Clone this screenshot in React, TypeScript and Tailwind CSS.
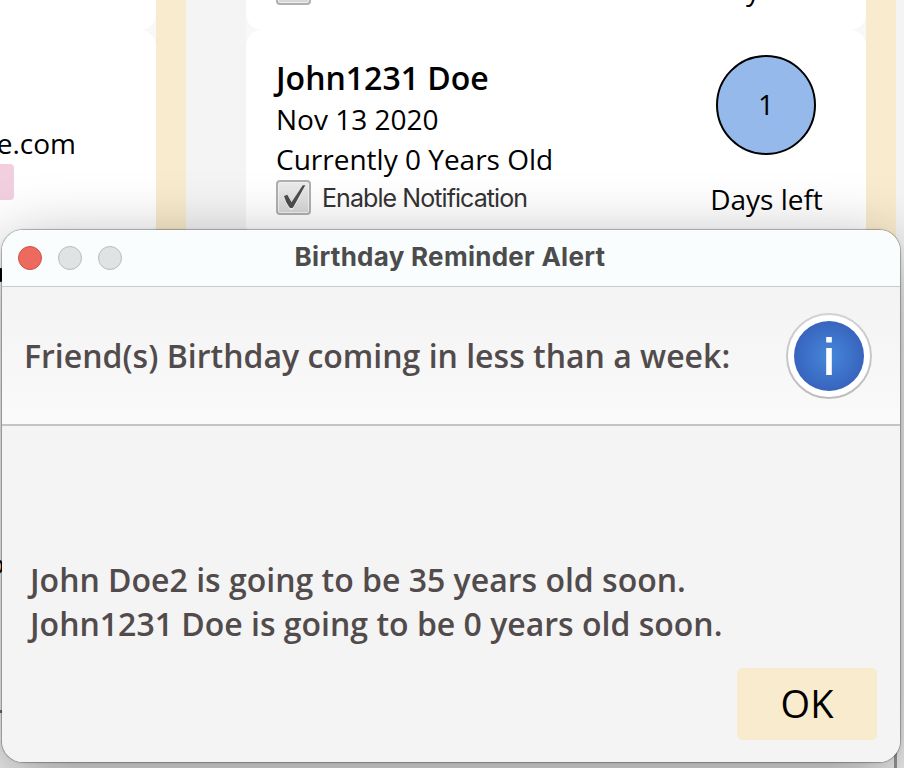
import React from 'react';

const OPEN = "font-['Open_Sans','Noto_Sans',sans-serif]";
const INTER = "font-['Inter',sans-serif]";

function CheckBox({ checked }: { checked: boolean }) {
  return (
    <div className="h-[35px] w-[35px] shrink-0 rounded-[4px] border-2 border-[#b0b0b0] bg-linear-to-b from-[#ececec] to-[#d6d6d6] shadow-[inset_0_0_0_1px_#f0f0f0]">
      {checked && (
        <svg viewBox="0 0 31 31" className="block h-[31px] w-[31px]">
          <path d="M6 14 L9.3 12.8 L13.5 20.2 L24.8 3.2 L27.3 3.2 L15.3 25.5 Q13.3 28 11.3 25.5 Q7.5 20.5 6 14Z" fill="#fff" transform="translate(0 1)" />
          <path d="M6 14 L9.3 12.8 L13.5 20.2 L24.8 3.2 L27.3 3.2 L15.3 25.2 Q13.3 27.3 11.3 25.2 Q7.5 20 6 14Z" fill="#4d4d4d" />
        </svg>
      )}
    </div>
  );
}

function FriendCard({ name, date, age, days, checked }: { name: string; date: string; age: string; days: string; checked: boolean }) {
  return (
    <div className={`flex h-[210px] shrink-0 justify-between rounded-[16px] bg-white pl-[30px] text-black ${OPEN}`}>
      <div className="flex flex-col whitespace-nowrap pt-[28px]">
        <div className="h-[41px] text-[32px] leading-[40px] font-semibold">{name}</div>
        <div className="h-[40px] text-[28px] leading-[40px]">{date}</div>
        <div className="h-[41px] text-[28px] leading-[40px]">{age}</div>
        <div className="flex items-center gap-[11px]">
          <CheckBox checked={checked} />
          {checked && <span className={`text-[25px] leading-[34px] tracking-[-0.93px] text-[#333] ${INTER}`}>Enable Notification</span>}
        </div>
      </div>
      <div className="flex w-[200px] flex-col items-center pt-[25px]">
        <div className="flex h-[100px] w-[100px] items-center justify-center rounded-full border-2 border-black bg-[#96b9ec] pb-[2px] text-[28px]">{days}</div>
        <div className="mt-[24px] ml-px text-[28px] leading-[40px]">Days left</div>
      </div>
    </div>
  );
}

function ContactCard({ email }: { email: string }) {
  return (
    <div className={`h-[210px] shrink-0 rounded-r-[16px] bg-white pt-[93px] ${OPEN}`}>
      <div className="flex h-[41px] w-[76px] justify-end text-[28px] leading-[40px] whitespace-nowrap text-black">{email}</div>
      <div className="h-[36px] w-[14px] rounded-r-[4px] bg-[#f2cfdf]" />
    </div>
  );
}

function InfoIcon() {
  return (
    <svg viewBox="0 0 86 86" className="h-[86px] w-[86px] shrink-0">
      <defs>
        <radialGradient id="blue">
          <stop offset="0" stopColor="#4588da" />
          <stop offset="1" stopColor="#3864be" />
        </radialGradient>
        <linearGradient id="ring" x1="0" y1="0" x2="0" y2="1">
          <stop offset="0" stopColor="#d2d2d2" />
          <stop offset="1" stopColor="#bdbdbd" />
        </linearGradient>
      </defs>
      <circle cx="43" cy="43" r="42" fill="#fff" stroke="url(#ring)" strokeWidth="2" />
      <circle cx="43" cy="43" r="35" fill="url(#blue)" />
      <rect x="40.2" y="24" width="5.6" height="5.5" fill="#fff" />
      <rect x="40.2" y="35" width="5.6" height="27" fill="#fff" />
    </svg>
  );
}

function AlertDialog() {
  return (
    <div className="absolute top-[230px] left-[2px] flex h-[532px] w-[898px] flex-col overflow-hidden rounded-[21px] bg-[#f4f4f4]">
      <div className="grid h-[57px] shrink-0 grid-cols-[150px_1fr_150px] items-center border-b border-[#c9cbcb] bg-[#f9fdfe]">
        <div className="flex gap-[16px] pl-[16px]">
          <span className="h-[24px] w-[24px] rounded-full border border-[#d25048] bg-[#ed6a5f]" />
          <span className="h-[24px] w-[24px] rounded-full border border-[#b9bcbd] bg-[#e0e3e4]" />
          <span className="h-[24px] w-[24px] rounded-full border border-[#b9bcbd] bg-[#e0e3e4]" />
        </div>
        <h1 className={`pr-[2px] pb-[2px] text-center text-[26px] leading-[30px] font-bold tracking-[0.28px] whitespace-nowrap text-[#4c4c4c] ${INTER}`}>Birthday Reminder Alert</h1>
      </div>
      <div className="flex h-[139px] shrink-0 items-center justify-between border-b-2 border-[#c4c4c4] bg-linear-to-b from-[#f3f3f3] to-[#fafafa] pr-[28px] pl-[22px]">
        <h2 className={`text-[32px] leading-[44px] font-semibold whitespace-nowrap text-[#524b4c] ${OPEN}`}>Friend(s) Birthday coming in less than a week:</h2>
        <InfoIcon />
      </div>
      <div className={`mt-[132px] pl-[28px] text-[32px] leading-[44px] font-semibold whitespace-nowrap text-[#524b4c] ${OPEN}`}>
        <p>John Doe2 is going to be 35 years old soon.</p>
        <p>John1231 Doe is going to be 0 years old soon.</p>
      </div>
      <button className={`mt-[22px] mr-[23px] h-[72px] w-[140px] shrink-0 self-end rounded-[5px] bg-[#f9ebcd] pb-[2px] text-[38px] text-black ${OPEN}`}>OK</button>
    </div>
  );
}

export default function App() {
  return (
    <div className="relative h-[768px] w-[904px] overflow-hidden bg-[#f4f4f4]">
      <div className="flex h-[740px] overflow-hidden">
        <div className="flex w-[156px] flex-col justify-start overflow-hidden bg-[#f8f8f8]">
          <div className="-mt-[180px] flex flex-col">
            <ContactCard email="" />
            <ContactCard email="e.com" />
            <div className="h-[600px] shrink-0 bg-white" />
          </div>
        </div>
        <div className="w-[30px] bg-[#f9ebcd]" />
        <div className="w-[60px]" />
        <div className="w-[620px] overflow-hidden bg-[#f8f8f8]">
          <div className="-mt-[180px] flex flex-col">
            <FriendCard name="" date="" age="" days="" checked={false} />
            <FriendCard name="John1231 Doe" date="Nov 13 2020" age="Currently 0 Years Old" days="1" checked />
          </div>
        </div>
        <div className="w-[30px] bg-[#f9ebcd]" />
        <div className="w-[8px]" />
      </div>
      <div className="absolute top-[268px] left-[-8px] h-[14px] w-[11px] rounded-[3px] bg-black" />
      <div className={`absolute top-[545px] left-[-12px] text-[28px] leading-[36px] text-black ${OPEN}`}>o</div>
      <div className="absolute top-[710px] left-0 h-[3px] w-[4px] bg-[#777]" />
      <div className="absolute top-[740px] left-[894px] h-[28px] w-[3px] bg-[#999]" />
      <div className="absolute top-[230px] left-[2px] h-[532px] w-[898px] rounded-[21px] shadow-[0_0_0_1px_rgba(0,0,0,0.2),0_0_3px_rgba(0,0,0,0.2),0_20px_70px_0px_rgba(0,0,0,0.4)]" />
      <AlertDialog />
    </div>
  );
}
